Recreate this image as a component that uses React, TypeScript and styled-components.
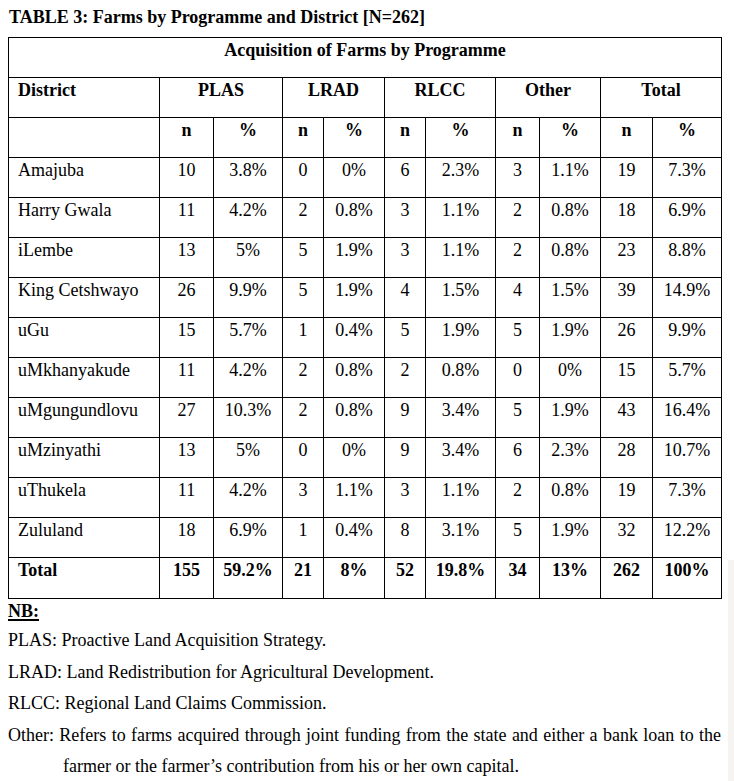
import { Fragment } from 'react'
import styled, { createGlobalStyle } from 'styled-components'

// farms per district: [name, PLAS n, %, LRAD n, %, RLCC n, %, Other n, %, Total n, %]
const rows: string[][] = [
    ['Amajuba', '10', '3.8%', '0', '0%', '6', '2.3%', '3', '1.1%', '19', '7.3%'],
    ['Harry Gwala', '11', '4.2%', '2', '0.8%', '3', '1.1%', '2', '0.8%', '18', '6.9%'],
    ['iLembe', '13', '5%', '5', '1.9%', '3', '1.1%', '2', '0.8%', '23', '8.8%'],
    ['King Cetshwayo', '26', '9.9%', '5', '1.9%', '4', '1.5%', '4', '1.5%', '39', '14.9%'],
    ['uGu', '15', '5.7%', '1', '0.4%', '5', '1.9%', '5', '1.9%', '26', '9.9%'],
    ['uMkhanyakude', '11', '4.2%', '2', '0.8%', '2', '0.8%', '0', '0%', '15', '5.7%'],
    ['uMgungundlovu', '27', '10.3%', '2', '0.8%', '9', '3.4%', '5', '1.9%', '43', '16.4%'],
    ['uMzinyathi', '13', '5%', '0', '0%', '9', '3.4%', '6', '2.3%', '28', '10.7%'],
    ['uThukela', '11', '4.2%', '3', '1.1%', '3', '1.1%', '2', '0.8%', '19', '7.3%'],
    ['Zululand', '18', '6.9%', '1', '0.4%', '8', '3.1%', '5', '1.9%', '32', '12.2%'],
]

const totals = ['Total', '155', '59.2%', '21', '8%', '52', '19.8%', '34', '13%', '262', '100%']

const programmes = ['PLAS', 'LRAD', 'RLCC', 'Other', 'Total']

// column widths measured off the printed table
const colWidths = [151, 54, 69, 41, 61, 41, 70, 44, 61, 52, 69]

const App = () => {
    return (
        <>
            <GlobalStyle />
            <Page>
                <Title>TABLE 3: Farms by Programme and District [N=262]</Title>
                <DataTable>
                    <colgroup>
                        {colWidths.map((w, i) => <col key={i} style={{ width: w }} />)}
                    </colgroup>
                    <tbody>
                        <tr>
                            <Cell colSpan={11} $bold $center>Acquisition of Farms by Programme</Cell>
                        </tr>
                        <tr>
                            <Cell $bold>District</Cell>
                            {programmes.map(p => (
                                <Cell key={p} colSpan={2} $bold $center>{p}</Cell>
                            ))}
                        </tr>
                        <tr>
                            <Cell />
                            {programmes.map(p => (
                                <Fragment key={p}>
                                    <Cell $bold $center>n</Cell>
                                    <Cell $bold $center>%</Cell>
                                </Fragment>
                            ))}
                        </tr>
                        {rows.map(row => (
                            <tr key={row[0]}>
                                {row.map((v, i) => (
                                    <Cell key={i} $center={i > 0}>{v}</Cell>
                                ))}
                            </tr>
                        ))}
                        <TotalRow>
                            {totals.map((v, i) => (
                                <Cell key={i} $bold $center={i > 0}>{v}</Cell>
                            ))}
                        </TotalRow>
                    </tbody>
                </DataTable>
                <NoteHeading>NB:</NoteHeading>
                <Notes>
                    <Note>PLAS: Proactive Land Acquisition Strategy.</Note>
                    <Note>LRAD: Land Redistribution for Agricultural Development.</Note>
                    <Note>RLCC: Regional Land Claims Commission.</Note>
                    <HangingNote>
                        Other: Refers to farms acquired through joint funding from the state and either a bank loan to the farmer or the farmer’s contribution from his or her own capital.
                    </HangingNote>
                </Notes>
            </Page>
        </>
    )
}

export default App

// the faint grey strip down the right edge comes from the scanned page
const GlobalStyle = createGlobalStyle`
    html {
        background-color: #ffffff;
        background-image: linear-gradient(#f6f3f3, #f6f3f3);
        background-size: 6px 221px;
        background-position: 728px 560px;
        background-repeat: no-repeat;
    }
    body {
        margin: 0;
        color: #000000;
        font-family: "Liberation Serif", "Times New Roman", serif;
    }
`

const Page = styled.div`
    padding: 7px 8px 0 8px;
    font-size: 18px;
`

const Title = styled.div`
    font-weight: 700;
    line-height: 21px;
    padding-left: 1px;
`

const DataTable = styled.table`
    margin-top: 9px;
    width: 714px;
    border-collapse: collapse;
    table-layout: fixed;
    border: 1px solid #000;
    background: #fff;
`

const Cell = styled.td<{ $bold?: boolean; $center?: boolean }>`
    border: 1px solid #000;
    height: 40px;
    box-sizing: border-box;
    padding: 2px 4px 0 9px;
    vertical-align: top;
    line-height: 21px;
    white-space: nowrap;
    font-weight: ${p => (p.$bold ? 700 : 400)};
    text-align: ${p => (p.$center ? 'center' : 'left')};
    ${p => p.$center && 'padding-left: 4px;'}
`

const TotalRow = styled.tr`
    & > td {
        height: 41px;
    }
`

const NoteHeading = styled.div`
    margin-top: 2px;
    font-weight: 700;
    line-height: 21px;
    text-decoration: underline;
    text-decoration-thickness: 1.5px;
    text-underline-offset: 2px;
`

const Notes = styled.div`
    margin-top: 3px;
    width: 713px;
`

const Note = styled.div`
    line-height: 31.5px;
`

const HangingNote = styled(Note)`
    padding-left: 55px;
    text-indent: -55px;
    text-align: justify;
`
